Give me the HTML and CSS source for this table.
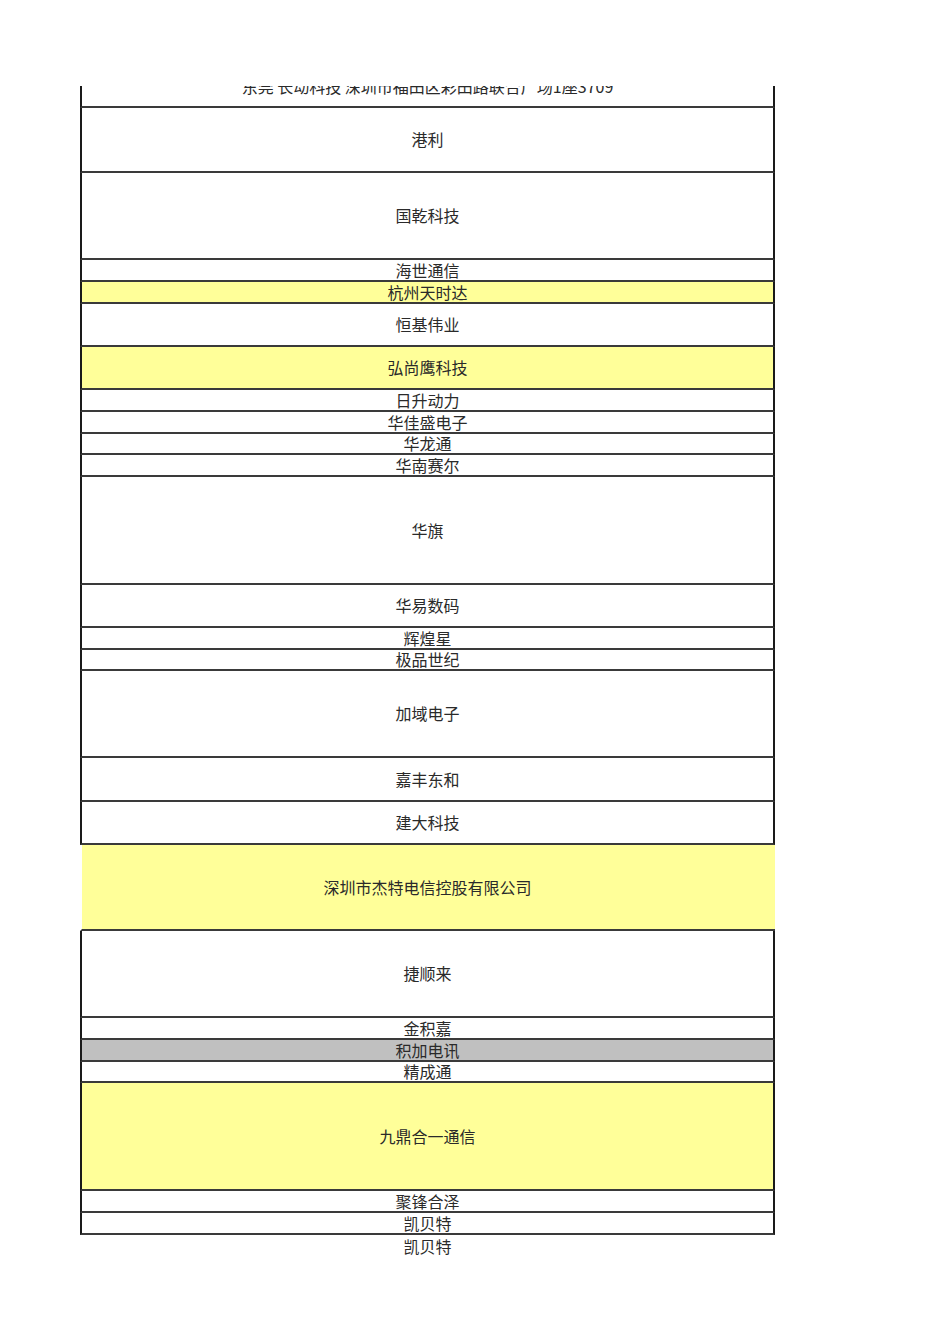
FILE: index.html
```html
<!DOCTYPE html>
<html lang="zh-CN">
<head>
<meta charset="utf-8">
<title>Sheet</title>
<link rel="stylesheet" href="styles.css">
</head>
<body>
<div class="sheet">
  <div class="row first h23"><span class="cut">东莞 长动科技 深圳市福田区彩田路联合广场1座3709</span></div>
  <div class="row h65"><span>港利</span></div>
  <div class="row h87"><span>国乾科技</span></div>
  <div class="row h22"><span>海世通信</span></div>
  <div class="row h22 yellow"><span>杭州天时达</span></div>
  <div class="row h43"><span>恒基伟业</span></div>
  <div class="row h43 yellow"><span>弘尚鹰科技</span></div>
  <div class="row h22"><span>日升动力</span></div>
  <div class="row h22"><span>华佳盛电子</span></div>
  <div class="row h21"><span>华龙通</span></div>
  <div class="row h22"><span>华南赛尔</span></div>
  <div class="row h108"><span>华旗</span></div>
  <div class="row h43"><span>华易数码</span></div>
  <div class="row h22"><span>辉煌星</span></div>
  <div class="row h21"><span>极品世纪</span></div>
  <div class="row h87"><span>加域电子</span></div>
  <div class="row h44"><span>嘉丰东和</span></div>
  <div class="row h43"><span>建大科技</span></div>
  <div class="row h86 yellow noside"><span>深圳市杰特电信控股有限公司</span></div>
  <div class="row h87"><span>捷顺来</span></div>
  <div class="row h22"><span>金积嘉</span></div>
  <div class="row h22 gray"><span>积加电讯</span></div>
  <div class="row h21"><span>精成通</span></div>
  <div class="row h108 yellow"><span>九鼎合一通信</span></div>
  <div class="row h22"><span>聚锋合泽</span></div>
  <div class="row h22"><span>凯贝特</span></div>
  <div class="row h22 plain"><span>凯贝特</span></div>
</div>
</body>
</html>
```

FILE: styles.css
```css
html, body {
  margin: 0;
  padding: 0;
  background: #ffffff;
}

body {
  font-family: "Noto Sans CJK SC", "DejaVu Sans", sans-serif;
  font-size: 16px;
  color: #2a2a2a;
}

.sheet {
  margin: 86px 0 0 80px;
  width: 695px;
  overflow: hidden;
}

.row {
  box-sizing: border-box;
  display: flex;
  align-items: center;
  justify-content: center;
  border-left: 2px solid #1a1a1a;
  border-right: 2px solid #1a1a1a;
  border-bottom: 2px solid #3a3a3a;
  line-height: 17px;
  white-space: nowrap;
  background-clip: padding-box;
}

.row.first {
  align-items: flex-start;
  overflow: hidden;
}

.cut {
  margin-top: -8px;
}

.yellow { background-color: #ffff99; }
.gray { background-color: #c0c0c0; }

.noside {
  border-left: 2px solid transparent;
  border-right: none;
  padding-right: 2px;
}

.plain {
  border: none;
}

.h21 { height: 21px; }
.h22 { height: 22px; }
.h23 { height: 22px; }
.h43 { height: 43px; }
.h44 { height: 44px; }
.h65 { height: 65px; }
.h86 { height: 86px; }
.h87 { height: 87px; }
.h108 { height: 108px; }
```
